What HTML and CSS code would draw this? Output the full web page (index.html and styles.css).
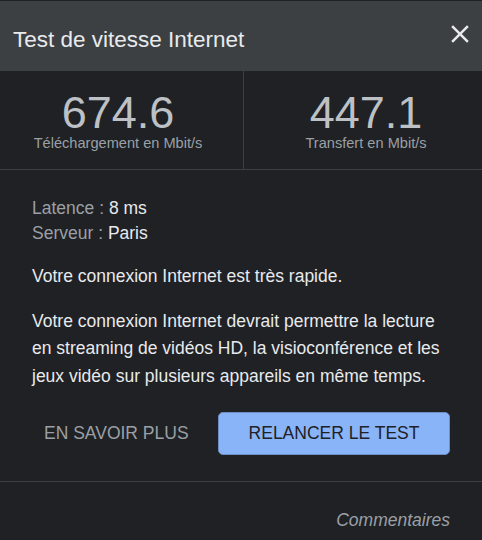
FILE: index.html
```html
<!DOCTYPE html>
<html lang="fr">
<head>
<meta charset="utf-8">
<title>Test de vitesse Internet</title>
<link rel="stylesheet" href="styles.css">
</head>
<body>
<div class="dialog">
  <header class="header">
    <h1 class="title">Test de vitesse Internet</h1>
    <button class="close" aria-label="Fermer">
      <svg viewBox="0 0 24 24" width="30" height="30"><path fill="currentColor" d="M19 6.41L17.59 5 12 10.59 6.41 5 5 6.41 10.59 12 5 17.59 6.41 19 12 13.41 17.59 19 19 17.59 13.41 12z"/></svg>
    </button>
  </header>
  <section class="stats">
    <div class="stat stat-down">
      <div class="stat-value">674.6</div>
      <div class="stat-label">Téléchargement en Mbit/s</div>
    </div>
    <div class="stat stat-up">
      <div class="stat-value">447.1</div>
      <div class="stat-label">Transfert en Mbit/s</div>
    </div>
  </section>
  <section class="details">
    <div class="meta">
      <div class="meta-row"><span class="meta-key">Latence : </span><span class="meta-val">8 ms</span></div>
      <div class="meta-row"><span class="meta-key">Serveur : </span><span class="meta-val">Paris</span></div>
    </div>
    <p class="text">Votre connexion Internet est très rapide.</p>
    <p class="text">Votre connexion Internet devrait permettre la lecture en streaming de vidéos HD, la visioconférence et les jeux vidéo sur plusieurs appareils en même temps.</p>
    <div class="actions">
      <button class="btn-text">EN SAVOIR PLUS</button>
      <button class="btn-primary">RELANCER LE TEST</button>
    </div>
  </section>
  <footer class="footer">
    <span class="feedback">Commentaires</span>
  </footer>
</div>
</body>
</html>
```
FILE: styles.css
```css
html, body {
  margin: 0;
  padding: 0;
  background: #202124;
}
body {
  font-family: "Liberation Sans", Arial, sans-serif;
  color: #e8eaed;
  height: 540px;
  overflow: hidden;
}
.dialog {
  padding-top: 1px;
}
.header {
  height: 70px;
  background: #3c4043;
  display: flex;
  justify-content: space-between;
  align-items: flex-start;
  padding: 0 7px 0 13px;
}
.title {
  margin: 26px 0 0 0;
  font-size: 22.5px;
  line-height: 26px;
  font-weight: normal;
  color: #e8eaed;
}
.close {
  margin-top: 18px;
  padding: 0;
  border: none;
  background: none;
  color: #e8eaed;
  width: 30px;
  height: 30px;
  display: block;
}
.close svg {
  display: block;
}
.stats {
  display: flex;
  height: 98px;
  border-bottom: 1px solid #3c4043;
}
.stat {
  display: flex;
  flex-direction: column;
  align-items: center;
  padding-top: 20px;
  box-sizing: border-box;
}
.stat-down {
  width: 243px;
  padding-right: 7px;
}
.stat-up {
  flex: 1;
  border-left: 1px solid #3c4043;
  padding-left: 6px;
}
.stat-value {
  font-size: 45px;
  line-height: 44px;
  color: #bdc1c6;
}
.stat-label {
  font-size: 14.6px;
  line-height: 16px;
  color: #9aa0a6;
}
.details {
  padding: 26px 32px 26px 32px;
  border-bottom: 1px solid #3c4043;
}
.meta-row {
  font-size: 17.5px;
  line-height: 25px;
}
.meta-key {
  color: #9aa0a6;
}
.meta-val {
  color: #e8eaed;
}
.text {
  margin: 17px 0 0 0;
  font-size: 17.5px;
  line-height: 27.5px;
  color: #e8eaed;
}
.actions {
  display: flex;
  align-items: center;
  justify-content: space-between;
  margin-top: 22px;
}
.btn-text {
  font-family: inherit;
  font-size: 17.5px;
  color: #9aa0a6;
  background: none;
  border: none;
  padding: 0 12px;
  height: 43px;
  white-space: nowrap;
}
.btn-primary {
  font-family: inherit;
  font-size: 17.5px;
  color: #202124;
  background: #8ab4f8;
  border: 1px solid #6f8fc4;
  border-radius: 5px;
  height: 43px;
  padding: 0;
  width: 232px;
  white-space: nowrap;
}
.footer {
  display: flex;
  justify-content: flex-end;
  padding: 28px 32px 0 32px;
}
.feedback {
  font-size: 17.5px;
  line-height: 20px;
  font-style: italic;
  color: #9aa0a6;
}
```
